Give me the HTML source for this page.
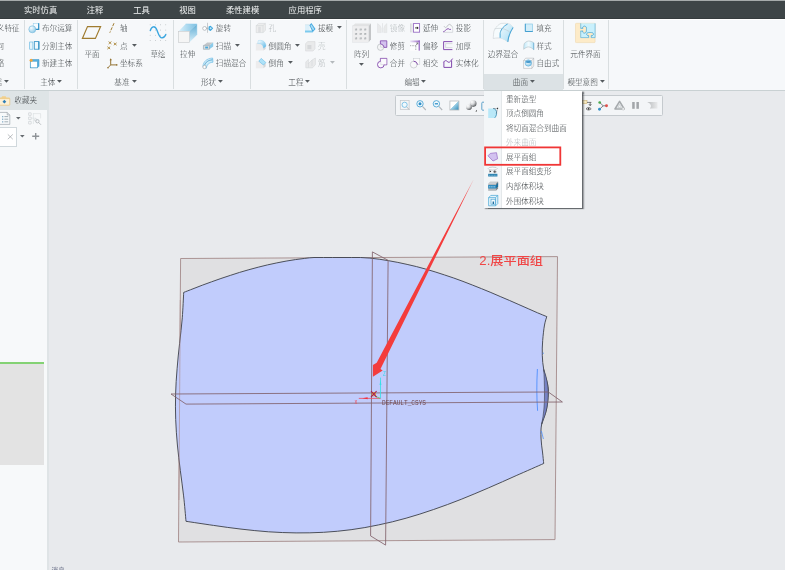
<!DOCTYPE html>
<html lang="zh-CN"><head><meta charset="utf-8"><title>Creo</title>
<style>
html,body{margin:0;padding:0}
body{width:785px;height:570px;overflow:hidden;position:relative;background:#e8eaed;font-family:"Liberation Sans","Noto Sans CJK SC",sans-serif;}
.t{position:absolute;white-space:nowrap;line-height:1;font-size:7.6px;color:#3a3f42;font-weight:300;}
.d{color:#b4b9bc}
.w{color:#f2f4f4;font-weight:400}
.a{position:absolute;overflow:visible}
#app{position:absolute;left:0;top:0;width:785px;height:570px;overflow:hidden;will-change:transform;}
</style></head><body><div id="app">
<div style="position:absolute;left:0px;top:0px;width:785px;height:18.6px;background:#3e4547;"></div>
<div style="position:absolute;left:0px;top:17.6px;width:785px;height:1px;background:#363c3e;"></div>
<div style="position:absolute;left:0px;top:0px;width:785px;height:1px;background:#a6abab;"></div>
<div style="position:absolute;left:0px;top:18.6px;width:785px;height:72px;background:#f6f8fa;"></div>
<div style="position:absolute;left:0px;top:18.6px;width:785px;height:1px;background:#ffffff;"></div>
<div style="position:absolute;left:0px;top:90px;width:785px;height:1.2px;background:#c9d1d3;"></div>
<div style="position:absolute;left:0px;top:91px;width:48.8px;height:479px;background:#dfe4e6;"></div>
<div style="position:absolute;left:0px;top:109.6px;width:47.2px;height:461px;background:#f7f9fa;"></div>
<div style="position:absolute;left:0px;top:91px;width:48.6px;height:18.6px;background:#dee4e6;"></div>
<div class="t w" style="left:24px;top:6.15px;font-size:8.3px;">实时仿真</div>
<div class="t w" style="left:86.8px;top:6.15px;font-size:8.3px;">注释</div>
<div class="t w" style="left:133.3px;top:6.15px;font-size:8.3px;">工具</div>
<div class="t w" style="left:179.3px;top:6.15px;font-size:8.3px;">视图</div>
<div class="t w" style="left:226px;top:6.15px;font-size:8.3px;">柔性建模</div>
<div class="t w" style="left:288.6px;top:6.15px;font-size:8.3px;">应用程序</div>
<div style="position:absolute;left:23.7px;top:20px;width:1px;height:69px;background:#d9dee0;"></div>
<div style="position:absolute;left:76.9px;top:20px;width:1px;height:69px;background:#d9dee0;"></div>
<div style="position:absolute;left:172.6px;top:20px;width:1px;height:69px;background:#d9dee0;"></div>
<div style="position:absolute;left:250.2px;top:20px;width:1px;height:69px;background:#d9dee0;"></div>
<div style="position:absolute;left:346.0px;top:20px;width:1px;height:69px;background:#d9dee0;"></div>
<div style="position:absolute;left:483.2px;top:20px;width:1px;height:69px;background:#d9dee0;"></div>
<div style="position:absolute;left:563.2px;top:20px;width:1px;height:69px;background:#d9dee0;"></div>
<div style="position:absolute;left:607.7px;top:20px;width:1px;height:69px;background:#d9dee0;"></div>
<div style="position:absolute;left:484.2px;top:74.2px;width:79px;height:16px;background:#dce2e5;"></div>
<div class="t " style="left:-3.2px;top:25.40px;">义特征</div>
<div class="t " style="left:-3.4px;top:43.10px;">何</div>
<div class="t " style="left:-3.4px;top:60.30px;">络</div>
<div class="t " style="left:-5.8px;top:78.90px;">据</div>
<svg class="a" style="left:4.25px;top:80.10px" width="4.9" height="2.8" viewBox="0 0 4.9 2.8"><path d="M0 0H4.9L2.45 2.8Z" fill="#565b5f"/></svg>
<div class="t " style="left:42px;top:25.40px;">布尔运算</div>
<div class="t " style="left:42px;top:43.10px;">分割主体</div>
<div class="t " style="left:42px;top:60.30px;">新建主体</div>
<div class="t " style="left:40.2px;top:78.90px;">主体</div>
<svg class="a" style="left:57.05px;top:80.10px" width="4.9" height="2.8" viewBox="0 0 4.9 2.8"><path d="M0 0H4.9L2.45 2.8Z" fill="#565b5f"/></svg>
<div class="t " style="left:42px;width:100px;text-align:center;top:51.40px;">平面</div>
<div class="t " style="left:120px;top:25.40px;">轴</div>
<div class="t " style="left:120px;top:43.10px;">点</div>
<svg class="a" style="left:131.85px;top:43.80px" width="4.9" height="2.8" viewBox="0 0 4.9 2.8"><path d="M0 0H4.9L2.45 2.8Z" fill="#565b5f"/></svg>
<div class="t " style="left:120px;top:60.30px;">坐标系</div>
<div class="t " style="left:108px;width:100px;text-align:center;top:51.40px;">草绘</div>
<div class="t " style="left:114.3px;top:78.90px;">基准</div>
<svg class="a" style="left:131.55px;top:80.10px" width="4.9" height="2.8" viewBox="0 0 4.9 2.8"><path d="M0 0H4.9L2.45 2.8Z" fill="#565b5f"/></svg>
<div class="t " style="left:137.7px;width:100px;text-align:center;top:51.40px;">拉伸</div>
<div class="t " style="left:215.8px;top:25.40px;">旋转</div>
<div class="t " style="left:215.8px;top:43.10px;">扫描</div>
<svg class="a" style="left:235.25px;top:43.80px" width="4.9" height="2.8" viewBox="0 0 4.9 2.8"><path d="M0 0H4.9L2.45 2.8Z" fill="#565b5f"/></svg>
<div class="t " style="left:215.8px;top:60.30px;">扫描混合</div>
<div class="t " style="left:201px;top:78.90px;">形状</div>
<svg class="a" style="left:218.05px;top:80.10px" width="4.9" height="2.8" viewBox="0 0 4.9 2.8"><path d="M0 0H4.9L2.45 2.8Z" fill="#565b5f"/></svg>
<div class="t d" style="left:268.6px;top:25.40px;">孔</div>
<div class="t " style="left:268.6px;top:43.10px;">倒圆角</div>
<svg class="a" style="left:295.45px;top:43.80px" width="4.9" height="2.8" viewBox="0 0 4.9 2.8"><path d="M0 0H4.9L2.45 2.8Z" fill="#565b5f"/></svg>
<div class="t " style="left:268.6px;top:60.30px;">倒角</div>
<svg class="a" style="left:287.75px;top:61.00px" width="4.9" height="2.8" viewBox="0 0 4.9 2.8"><path d="M0 0H4.9L2.45 2.8Z" fill="#565b5f"/></svg>
<div class="t " style="left:317.9px;top:25.40px;">拔模</div>
<svg class="a" style="left:337.45px;top:26.10px" width="4.9" height="2.8" viewBox="0 0 4.9 2.8"><path d="M0 0H4.9L2.45 2.8Z" fill="#565b5f"/></svg>
<div class="t d" style="left:317.9px;top:43.10px;">壳</div>
<div class="t d" style="left:317.9px;top:60.30px;">筋</div>
<svg class="a" style="left:329.85px;top:61.00px" width="4.9" height="2.8" viewBox="0 0 4.9 2.8"><path d="M0 0H4.9L2.45 2.8Z" fill="#b4b9bc"/></svg>
<div class="t " style="left:288.3px;top:78.90px;">工程</div>
<svg class="a" style="left:305.05px;top:80.10px" width="4.9" height="2.8" viewBox="0 0 4.9 2.8"><path d="M0 0H4.9L2.45 2.8Z" fill="#565b5f"/></svg>
<div class="t " style="left:311.6px;width:100px;text-align:center;top:51.40px;">阵列</div>
<svg class="a" style="left:358.95px;top:62.70px" width="4.9" height="2.8" viewBox="0 0 4.9 2.8"><path d="M0 0H4.9L2.45 2.8Z" fill="#565b5f"/></svg>
<div class="t d" style="left:389.8px;top:25.40px;">镜像</div>
<div class="t " style="left:389.8px;top:43.10px;">修剪</div>
<div class="t " style="left:389.8px;top:60.30px;">合并</div>
<div class="t " style="left:422.9px;top:25.40px;">延伸</div>
<div class="t " style="left:422.9px;top:43.10px;">偏移</div>
<div class="t " style="left:422.9px;top:60.30px;">相交</div>
<div class="t " style="left:455.8px;top:25.40px;">投影</div>
<div class="t " style="left:455.8px;top:43.10px;">加厚</div>
<div class="t " style="left:455.8px;top:60.30px;">实体化</div>
<div class="t " style="left:404.4px;top:78.90px;">编辑</div>
<svg class="a" style="left:421.35px;top:80.10px" width="4.9" height="2.8" viewBox="0 0 4.9 2.8"><path d="M0 0H4.9L2.45 2.8Z" fill="#565b5f"/></svg>
<div class="t " style="left:453px;width:100px;text-align:center;top:51.40px;">边界混合</div>
<div class="t " style="left:536.5px;top:25.40px;">填充</div>
<div class="t " style="left:536.5px;top:43.10px;">样式</div>
<div class="t " style="left:536.5px;top:60.30px;">自由式</div>
<div class="t " style="left:512.8px;top:78.90px;">曲面</div>
<svg class="a" style="left:529.85px;top:80.10px" width="4.9" height="2.8" viewBox="0 0 4.9 2.8"><path d="M0 0H4.9L2.45 2.8Z" fill="#565b5f"/></svg>
<div class="t " style="left:535.5px;width:100px;text-align:center;top:51.40px;">元件界面</div>
<div class="t " style="left:567.4px;top:78.90px;">模型意图</div>
<svg class="a" style="left:600.05px;top:80.10px" width="4.9" height="2.8" viewBox="0 0 4.9 2.8"><path d="M0 0H4.9L2.45 2.8Z" fill="#565b5f"/></svg>
<div class="t " style="left:14.3px;top:96.60px;">收藏夹</div>
<div style="position:absolute;left:-1px;top:127.4px;width:15.7px;height:17.2px;background:#fff;border:0.9px solid #d0d8dc;"></div>
<svg class="a" style="left:15.80px;top:117.25px" width="4.6" height="2.5" viewBox="0 0 4.6 2.5"><path d="M0 0H4.6L2.3 2.5Z" fill="#666b6f"/></svg>
<svg class="a" style="left:20.20px;top:135.25px" width="4.6" height="2.5" viewBox="0 0 4.6 2.5"><path d="M0 0H4.6L2.3 2.5Z" fill="#666b6f"/></svg>
<div style="position:absolute;left:0px;top:362.2px;width:43.7px;height:1.8px;background:#84d274;"></div>
<div style="position:absolute;left:0px;top:364px;width:43.7px;height:100.8px;background:#e3e3e3;"></div>
<div class="t " style="left:51.6px;top:568.10px;font-size:6.6px;color:#8a8fa2;font-weight:700;">消息</div>
<div style="position:absolute;left:394.9px;top:95.2px;width:266.6px;height:19.0px;background:#f3f5f7;border:0.9px solid #c5cace;border-radius:1.5px;"></div>
<svg class="a" style="left:0;top:0" width="785" height="570" viewBox="0 0 785 570"><path d="M180.6 258.5L557.5 256.6L555 539.6L178.5 542Z" fill="#e0e0e2" stroke="#a48a8a" stroke-width="0.9"/><path d="M183.7 292.4C185.3 291.8 189.9 290.0 193.0 288.8C196.1 287.6 199.2 286.4 202.3 285.2C205.4 284.1 208.5 282.9 211.6 281.8C214.7 280.7 217.8 279.6 220.9 278.5C224.0 277.4 227.1 276.4 230.3 275.4C233.4 274.4 236.5 273.4 239.6 272.4C242.7 271.5 245.8 270.6 248.9 269.7C252.0 268.8 255.1 268.0 258.2 267.2C261.3 266.4 264.4 265.6 267.5 264.9C270.6 264.2 273.7 263.5 276.8 262.9C279.9 262.2 283.0 261.7 286.1 261.1C289.2 260.6 292.3 260.1 295.4 259.6C298.5 259.2 301.6 258.7 304.7 258.4C307.8 258.0 310.9 257.6 314.0 257.5C317.1 257.4 320.3 257.5 323.4 257.5C326.5 257.5 329.6 257.5 332.7 257.5C335.8 257.5 338.9 257.5 342.0 257.5C345.1 257.5 348.2 257.5 351.3 257.5C354.4 257.5 357.5 257.4 360.6 257.5C363.7 257.6 366.8 257.8 369.9 258.1C373.0 258.4 376.1 258.8 379.2 259.2C382.3 259.7 385.4 260.1 388.5 260.7C391.6 261.2 394.7 261.8 397.8 262.4C400.9 263.0 404.0 263.7 407.1 264.4C410.2 265.1 413.4 265.8 416.5 266.6C419.6 267.4 422.7 268.3 425.8 269.1C428.9 270.0 432.0 270.9 435.1 271.9C438.2 272.8 441.3 273.8 444.4 274.9C447.5 275.9 450.6 276.9 453.7 278.0C456.8 279.1 459.9 280.3 463.0 281.4C466.1 282.6 469.2 283.8 472.3 285.0C475.4 286.2 478.5 287.4 481.6 288.7C484.7 289.9 487.8 291.2 490.9 292.5C494.0 293.8 497.1 295.1 500.2 296.5C503.4 297.8 506.5 299.1 509.6 300.5C512.7 301.8 515.8 303.2 518.9 304.6C522.0 305.9 525.1 307.3 528.2 308.7C531.3 310.1 534.4 311.5 537.5 312.8C540.6 314.1 545.2 316.0 546.8 316.6C546.4 318.0 545.2 321.1 544.5 325.0C543.8 328.9 543.1 335.2 542.7 340.3C542.3 345.4 542.1 350.8 542.3 355.6C542.5 360.4 542.8 364.6 543.7 369.3C544.6 374.0 546.8 379.9 547.6 384.0C548.4 388.1 548.5 389.7 548.3 394.0C548.1 398.3 547.5 404.9 546.4 410.0C545.3 415.1 542.5 419.8 541.6 424.5C540.7 429.2 540.9 433.4 541.0 438.0C541.1 442.6 542.0 447.8 542.5 452.0C543.0 456.2 543.5 461.6 543.7 463.5C539.1 465.5 525.4 471.6 516.2 475.6C507.0 479.7 497.8 483.9 488.7 487.8C479.5 491.7 470.3 495.7 461.2 499.3C452.0 502.9 442.8 506.4 433.6 509.5C424.5 512.7 415.3 515.6 406.1 518.2C397.0 520.8 387.8 523.0 378.6 524.9C369.4 526.9 360.3 528.4 351.1 529.7C341.9 530.9 332.7 531.8 323.6 532.3C314.4 532.8 305.2 533.0 296.1 532.9C286.9 532.8 277.7 532.4 268.5 531.8C259.4 531.1 250.2 530.2 241.0 529.1C231.9 528.1 222.7 526.7 213.5 525.4C204.3 524.1 190.6 522.0 186.0 521.3C185.6 517.1 184.6 504.3 183.6 495.9C182.7 487.4 181.3 478.9 180.3 470.4C179.3 462.0 178.2 453.5 177.4 445.0C176.6 436.5 176.0 428.0 175.7 419.6C175.4 411.1 175.4 402.6 175.6 394.1C175.8 385.7 176.4 377.2 177.1 368.7C177.7 360.2 178.7 351.7 179.6 343.3C180.5 334.8 181.6 326.3 182.3 317.8C182.9 309.4 183.5 296.6 183.7 292.4Z" fill="#c1ccfc" stroke="#3c4048" stroke-width="0.9" stroke-linejoin="round"/><path d="M543.7 369.3C547 378 548.6 388 548.2 396C547.8 408 545 416 541.6 424.5C543.8 414 544.6 404 544.5 394C544.4 384 544.2 376 543.7 369.3Z" fill="#7682c4" stroke="#3c4048" stroke-width="0.6"/><path d="M537.4 369C536.6 384 536.6 398 537.6 410.8" fill="none" stroke="#3f86ff" stroke-width="0.8"/><path d="M541.4 431L543.4 439M542.6 353.2H544" fill="none" stroke="#3f86ff" stroke-width="0.7"/><path d="M180.3 300L178.9 500" stroke="#a98686" stroke-width="0.8" opacity="0.75"/><path d="M372.4 251.9L370.6 535.9L385.6 545.1L388.1 260.3Z" fill="none" stroke="#82626c" stroke-width="0.85"/><path d="M171 394L548.3 392L562.4 402L186 404.1Z" fill="none" stroke="#82626c" stroke-width="0.85"/><path d="M380.5 398.4V377.6" stroke="#35e0e6" stroke-width="0.8"/><path d="M380.5 380L379.6 385H381.4Z" fill="#35e0e6"/><path d="M380.5 398.4H358.8" stroke="#f04a5a" stroke-width="0.8"/><path d="M362.4 398.2L367.6 397.2V399.2Z" fill="#f0303c"/><path d="M375.2 396.2L380.2 398.4" stroke="#4cc84c" stroke-width="0.7"/><circle cx="373.8" cy="394.2" r="1.7" fill="none" stroke="#e8a020" stroke-width="1"/><path d="M371 391L376.6 397.2M376.6 391L371 397.2" stroke="#a81c50" stroke-width="1.1"/><text x="382.9" y="376.4" font-family="Liberation Mono, monospace" font-size="6.4" fill="#35d8e6" textLength="2.8" lengthAdjust="spacingAndGlyphs">Z</text><text x="354.4" y="403.8" font-family="Liberation Mono, monospace" font-size="4.6" fill="#f0404c">X</text><text x="382" y="404.9" font-family="Liberation Mono, monospace" font-size="7" fill="#70484e" textLength="44" lengthAdjust="spacingAndGlyphs">DEFAULT_CSYS</text><path d="M473.7 179.3L380.5 368.9L382.7 370.4L372.9 376.8L372.9 365L376.7 362.7Z" fill="#f43c3c"/><text transform="translate(479.3,265.2) scale(1,0.9)" font-family="Liberation Sans, Noto Sans CJK SC, sans-serif" font-size="13.2" font-weight="500" fill="#f04646">2.展平面组</text></svg>
<svg class="a" style="left:0;top:0" width="785" height="570" viewBox="0 0 785 570"><defs><linearGradient id="tg1" x1="0" y1="0" x2="1" y2="1"><stop offset="0.5" stop-color="#ffffff"/><stop offset="0.5" stop-color="#9fd0e6"/><stop offset="1" stop-color="#2a88b8"/></linearGradient>
<linearGradient id="tg2" x1="0" y1="0" x2="1" y2="0"><stop offset="0" stop-color="#b9bcbe"/><stop offset="1" stop-color="#e9eaeb"/></linearGradient>
<linearGradient id="tg3" x1="0" y1="1" x2="1" y2="0"><stop offset="0" stop-color="#e4e5e6"/><stop offset="0.6" stop-color="#8c9093"/><stop offset="1" stop-color="#3c3f42"/></linearGradient>
<radialGradient id="tg4" cx="0.3" cy="0.25" r="0.85"><stop offset="0" stop-color="#ffffff"/><stop offset="0.45" stop-color="#d4d6d8"/><stop offset="1" stop-color="#4a4d50"/></radialGradient></defs><rect x="400.3" y="100.6" width="8.8" height="8.8" fill="#f4f5f6" stroke="#c2c6c9" stroke-width="0.7"/><circle cx="404.6" cy="104.8" r="2.6" fill="#f0f9fd" stroke="#58b0e0" stroke-width="0.7"/><path d="M406.6 106.8L409.4 109.8" stroke="#b4b9bd" stroke-width="1"/><circle cx="420" cy="103.8" r="3.2" fill="#f2f9fd" stroke="#3c9dd0" stroke-width="0.8"/><circle cx="420" cy="103.8" r="1.5" fill="#2f8fc8"/><path d="M422.4 106.4L425.8 110" stroke="#b2b7bb" stroke-width="1.1"/><circle cx="436.4" cy="103.8" r="3.2" fill="#f2f9fd" stroke="#3c9dd0" stroke-width="0.8"/><path d="M434.8 103.8H438" stroke="#2f8fc8" stroke-width="1.3"/><path d="M438.8 106.4L442.2 110" stroke="#b2b7bb" stroke-width="1.1"/><rect x="449.9" y="101" width="9" height="9" fill="url(#tg1)" stroke="#b7bbbe" stroke-width="0.8"/><circle cx="473.2" cy="103.6" r="3.3" fill="url(#tg4)"/><circle cx="469" cy="107.2" r="2.8" fill="url(#tg4)"/><path d="M475.4 111.4L476.9 111.4V109.8Z" fill="#333"/><path d="M484.4 102.2H482.6C482 102.2 481.8 102.6 481.8 103.2V109.2C481.8 109.8 482 110.2 482.6 110.2H484.4" fill="none" stroke="#3c8fc0" stroke-width="0.8"/><rect x="582.4" y="100.5" width="4.6" height="3.2" fill="#f9ebc0" stroke="#c4a868" stroke-width="0.5"/><path d="M587 102.4H591.4M590.2 102.4V105.4M588.8 104L590.2 105.8L591.4 104" fill="none" stroke="#333" stroke-width="0.6"/><path d="M586 108.8C587.4 107 589.8 107 591.2 108.8C589.8 110.4 587.4 110.4 586 108.8Z" fill="#fff" stroke="#333" stroke-width="0.6"/><circle cx="588.6" cy="108.8" r="0.9" fill="#333"/><path d="M599.8 102.6L603.2 105.8L599.6 109.2M603.2 105.8H606.4" fill="none" stroke="#4a4f53" stroke-width="0.7"/><circle cx="599.7" cy="102.5" r="1.35" fill="#49a84c"/><circle cx="606.5" cy="105.8" r="1.45" fill="#e0504a"/><circle cx="599.5" cy="109.2" r="1.45" fill="#3591c8"/><path d="M619.6 101.4L624.2 109H615Z" fill="none" stroke="#a6aaad" stroke-width="1.6" stroke-linejoin="round"/><path d="M619.6 104.4L621.4 107.6H617.8Z" fill="none" stroke="#b9bdc0" stroke-width="0.6"/><circle cx="623.2" cy="108.9" r="1.2" fill="#f5f6f7" stroke="#b0b4b7" stroke-width="0.5"/><rect x="632.2" y="102" width="2.5" height="6.8" fill="#a2a6a9"/><rect x="636.4" y="102" width="2.5" height="6.8" fill="#a2a6a9"/><path d="M647.2 102H657.5V108.5H649.8C651.8 106.8 651.6 104 647.2 102Z" fill="url(#tg2)"/></svg>
<svg class="a" style="left:0;top:0" width="785" height="570" viewBox="0 0 785 570"><path d="M-1 97.4H1.4L2.2 96.2H5.6L6.4 97.4H9.2C9.6 97.4 9.8 97.6 9.8 98V104.6C9.8 105 9.6 105.2 9.2 105.2H-1Z" fill="#f3d08c"/><path d="M-1 98.6H9.8V104.6C9.8 105 9.6 105.2 9.2 105.2H-1Z" fill="#fdf0d4" stroke="#e2b866" stroke-width="0.5"/><path d="M4.4 99.8L6.3 101.7L4.4 103.6L2.5 101.7Z" fill="#2f7fb8"/><path d="M-1 112.4H7.2L9.8 115V124.4H-1Z" fill="#f8fafb" stroke="#8e979d" stroke-width="0.6"/><path d="M7.2 112.4V115H9.8" fill="#dfe4e7" stroke="#8e979d" stroke-width="0.5"/><rect x="2" y="116.0" width="1.3" height="1.3" fill="#8ab0c8"/><path d="M4.4 116.6H8.2" stroke="#7f8f9a" stroke-width="0.7"/><rect x="2" y="118.60000000000001" width="1.3" height="1.3" fill="#8ab0c8"/><path d="M4.4 119.2H8.2" stroke="#7f8f9a" stroke-width="0.7"/><rect x="2" y="121.2" width="1.3" height="1.3" fill="#8ab0c8"/><path d="M4.4 121.8H8.2" stroke="#7f8f9a" stroke-width="0.7"/><rect x="28.6" y="112.8" width="2.6" height="2.6" rx="0.2" fill="none" stroke="#c3c8cc" stroke-width="0.55"/><rect x="28.6" y="117.0" width="2.6" height="2.6" rx="0.2" fill="none" stroke="#c3c8cc" stroke-width="0.55"/><rect x="28.6" y="121.39999999999999" width="2.6" height="2.6" rx="0.2" fill="none" stroke="#c3c8cc" stroke-width="0.55"/><path d="M33.4 113V124M33.4 113.6H40.6V118.4M31.4 118.2H36" fill="none" stroke="#d3d8db" stroke-width="0.5"/><circle cx="37.4" cy="121.2" r="1.7" fill="none" stroke="#a9afb3" stroke-width="0.7"/><circle cx="35.8" cy="120" r="1.3" fill="none" stroke="#c4c9cd" stroke-width="0.5"/><path d="M38.6 122.4L41 124.8" stroke="#a9afb3" stroke-width="0.8"/><path d="M7.8 134.4L12.8 139.2M12.8 134.4L7.8 139.2" stroke="#8f9498" stroke-width="0.6"/><path d="M32.2 136.3H39.2M35.7 133V139.6" stroke="#8e9397" stroke-width="1.4"/></svg>
<svg class="a" style="left:0;top:0" width="785" height="570" viewBox="0 0 785 570"><defs>
<radialGradient id="gs" cx="0.35" cy="0.3" r="0.8"><stop offset="0" stop-color="#f8fcfe"/><stop offset="1" stop-color="#86c6e6"/></radialGradient>
<linearGradient id="gt" x1="0" y1="0" x2="1" y2="0"><stop offset="0" stop-color="#d8f0fb"/><stop offset="1" stop-color="#7cc0e2"/></linearGradient>
<linearGradient id="gr" x1="0" y1="0" x2="0" y2="1"><stop offset="0" stop-color="#5fabd2"/><stop offset="1" stop-color="#d8f0fb"/></linearGradient>
<linearGradient id="gb" x1="0" y1="0" x2="1" y2="1"><stop offset="0" stop-color="#f2fafe"/><stop offset="1" stop-color="#a6dcf3"/></linearGradient>
<linearGradient id="gg" x1="0" y1="0" x2="1" y2="0"><stop offset="0" stop-color="#d6d8da"/><stop offset="1" stop-color="#f2f3f4"/></linearGradient>
<linearGradient id="gp" x1="0" y1="0" x2="1" y2="0"><stop offset="0" stop-color="#efe8fa"/><stop offset="1" stop-color="#9a68c4"/></linearGradient>
<linearGradient id="gf" x1="0" y1="0" x2="1" y2="1"><stop offset="0.1" stop-color="#f4fbfe"/><stop offset="1" stop-color="#54b4e6"/></linearGradient>
<linearGradient id="gy" x1="0" y1="0" x2="1" y2="0"><stop offset="0" stop-color="#bfe8f9"/><stop offset="0.5" stop-color="#f2fbfe"/><stop offset="1" stop-color="#b4e3f7"/></linearGradient>
</defs><rect x="33.2" y="23.4" width="5.6" height="5.8" fill="#f6fbfe" stroke="#8fcdea" stroke-width="0.5"/><path d="M38.7 23.2V29.3H34" fill="none" stroke="#2f8fc4" stroke-width="1.2"/><circle cx="32.3" cy="29.3" r="3.5" fill="url(#gs)" stroke="#74b9dc" stroke-width="0.6"/><rect x="29.7" y="42" width="3.2" height="7.2" fill="#e6f4fb" stroke="#5bb4e2" stroke-width="0.6"/><rect x="34.3" y="41.6" width="4.5" height="7.6" fill="#eef8fd" stroke="#2f8fc4" stroke-width="0.8"/><path d="M38.9 41.4V49.4" stroke="#2f8fc4" stroke-width="1.1"/><path d="M30.4 61.2L32 59.6H39V66.2L37.4 67.8H30.4Z" fill="#5bb4e2" stroke="#2f8fc4" stroke-width="0.5"/><rect x="30.4" y="61.2" width="7" height="6.6" fill="#ffffff" stroke="#2f8fc4" stroke-width="0.5"/><circle cx="31.1" cy="60.3" r="1.5" fill="#f5a73c"/><path d="M87.5 26.6H100.6L95.4 38.4H82.4Z" fill="none" stroke="#a07c30" stroke-width="1.15"/><path d="M114 23.2L109.8 32.7" stroke="#a07c30" stroke-width="1" stroke-dasharray="3.2 1.3"/><path d="M108.6 41.599999999999994L111.4 44.0M108.6 44.0L111.4 41.599999999999994" stroke="#a98638" stroke-width="0.9"/><path d="M113.8 42.8L116.60000000000001 45.2M113.8 45.2L116.60000000000001 42.8" stroke="#a98638" stroke-width="0.9"/><path d="M107.39999999999999 46.699999999999996L110.2 49.1M107.39999999999999 49.1L110.2 46.699999999999996" stroke="#a98638" stroke-width="0.9"/><path d="M110.7 59.6V64.9H116.4M110.7 64.9L108.2 67.5" fill="none" stroke="#8e6c28" stroke-width="0.95"/><path d="M110.7 58.2L109.6 60.2H111.8Z" fill="#8e6c28"/><rect x="116" y="64.2" width="1.4" height="1.4" fill="#8e6c28"/><circle cx="108" cy="67.7" r="0.8" fill="#8e6c28"/><rect x="149.79999999999998" y="24.400000000000002" width="0.8" height="0.8" fill="#b4b9bd"/><rect x="149.79999999999998" y="29.700000000000003" width="0.8" height="0.8" fill="#b4b9bd"/><rect x="149.79999999999998" y="34.9" width="0.8" height="0.8" fill="#b4b9bd"/><rect x="149.79999999999998" y="40.2" width="0.8" height="0.8" fill="#b4b9bd"/><rect x="155.0" y="24.400000000000002" width="0.8" height="0.8" fill="#b4b9bd"/><rect x="155.0" y="29.700000000000003" width="0.8" height="0.8" fill="#b4b9bd"/><rect x="155.0" y="34.9" width="0.8" height="0.8" fill="#b4b9bd"/><rect x="155.0" y="40.2" width="0.8" height="0.8" fill="#b4b9bd"/><rect x="160.2" y="24.400000000000002" width="0.8" height="0.8" fill="#b4b9bd"/><rect x="160.2" y="29.700000000000003" width="0.8" height="0.8" fill="#b4b9bd"/><rect x="160.2" y="34.9" width="0.8" height="0.8" fill="#b4b9bd"/><rect x="160.2" y="40.2" width="0.8" height="0.8" fill="#b4b9bd"/><rect x="165.29999999999998" y="24.400000000000002" width="0.8" height="0.8" fill="#b4b9bd"/><rect x="165.29999999999998" y="29.700000000000003" width="0.8" height="0.8" fill="#b4b9bd"/><rect x="165.29999999999998" y="34.9" width="0.8" height="0.8" fill="#b4b9bd"/><rect x="165.29999999999998" y="40.2" width="0.8" height="0.8" fill="#b4b9bd"/><path d="M150.3 30.6C151.5 25.8 155.2 25.4 157 30.2C158.6 34.6 159.6 38.2 162 37.9C164 37.6 165.2 36 165.8 34.4" fill="none" stroke="#3aa6e0" stroke-width="1.35" stroke-linecap="round"/><path d="M178.6 31.3L185.7 23.9H196.9L189.3 31.3Z" fill="url(#gt)"/><path d="M189.3 31.3L196.9 23.9V35L189.3 42.5Z" fill="url(#gr)"/><path d="M185.7 23.9H196.9V35" fill="none" stroke="#8ccbe8" stroke-width="0.4"/><rect x="178.6" y="31.3" width="10.7" height="11.2" fill="#f5f5f5" stroke="#c6c9cb" stroke-width="0.6"/><path d="M207.5 22.8V32.8" stroke="#a8adb0" stroke-width="0.6"/><circle cx="204.6" cy="28.4" r="1.9" fill="#fff" stroke="#9aa0a4" stroke-width="0.6"/><path d="M206 28.3H208.6" stroke="#9aa0a4" stroke-width="0.6"/><path d="M208.6 26.6L210.6 25.7L213.2 28.2L210.6 30.9L208.6 30Z" fill="#38a4dc"/><circle cx="210.6" cy="28.3" r="1" fill="#c6e8f8"/><path d="M203.4 45.4L207.2 42.4H213.2L209.4 45.4Z" fill="#c3c7ca"/><path d="M203.4 45.4H209.4L213.2 42.6V46.4L209.4 49.3H203.4Z" fill="#8acbea"/><path d="M203.4 45.4H209.4V49.3H203.4Z" fill="#d9dcde" stroke="#9aa1a6" stroke-width="0.5"/><path d="M205.2 46.6H208V48.4H205.2Z" fill="#4aa9da"/><path d="M202.9 66.4C203.4 61.6 206.4 58.6 212.6 58L213 62.2C209 62.6 207.2 64.2 206.2 68.2Z" fill="url(#gb)" stroke="#5bb4e2" stroke-width="0.6"/><path d="M204.6 65.2C205.6 62 207.8 60.4 212.4 59.8" fill="none" stroke="#2f8fc4" stroke-width="0.7"/><circle cx="204.5" cy="67" r="1.7" fill="#fff" stroke="#8e959a" stroke-width="0.55"/><path d="M256.2 25.6L258.6 23.4H265.4V30.4L263 32.6H256.2Z" fill="#eceded" stroke="#cfd2d4" stroke-width="0.5"/><path d="M256.2 25.6H263V32.6M263 25.6L265.4 23.4" fill="none" stroke="#cfd2d4" stroke-width="0.5"/><rect x="258.2" y="26.8" width="2.6" height="5.8" fill="#dcdee0"/><path d="M255.8 43H263.4V50.5H255.8Z" fill="#ececed"/><path d="M263.4 44.5L265.6 46.4V49L263.4 50.5Z" fill="#d4d6d8"/><path d="M258.4 40.5C261 40 263.4 40.6 264.6 42.2C265.6 43.4 266 44.8 266 46.2L263.4 48.2C263.2 46.4 262.8 45.2 261.8 44.4C260.8 43.6 259.4 43.4 257.6 43.6Z" fill="url(#gf)" stroke="#7cc8ee" stroke-width="0.35"/><path d="M255.8 61H263.4V68.3H255.8Z" fill="#ececed"/><path d="M263.4 64.6L265.6 62.8V66.6L263.4 68.3Z" fill="#d4d6d8"/><path d="M261.2 58.4L265.9 62.5L263.4 65L258.8 61.2Z" fill="#aee2f8" stroke="#58b4e2" stroke-width="0.5"/><path d="M305 24.7H309.6V30.8H305Z" fill="#dcf0fa"/><path d="M305 24.7H309.6" stroke="#c4d8e2" stroke-width="0.4"/><path d="M305 30.6H312.4L312.8 32.4H305Z" fill="#7ccaee"/><path d="M311.4 23L315.5 29.1L312.7 32.3L309.4 25.3Z" fill="#44a8e0"/><path d="M311.4 24.6L314.3 29.1L313.1 30.5L310.4 25.7Z" fill="#a8dcf4"/><path d="M305.6 43.8L307.6 41.6H315V48.8L313 51H305.6Z" fill="#e9eaeb" stroke="#d0d3d5" stroke-width="0.5"/><rect x="307.4" y="45" width="4" height="4.2" fill="#d6d8da"/><path d="M305.8 62L308.4 59.4V63.6L312 60L315.4 58V64.6L312.6 67.8H305.8Z" fill="#e9eaeb" stroke="#cfd2d4" stroke-width="0.5"/><path d="M308.4 63.6V67.6M312 60V66" stroke="#cfd2d4" stroke-width="0.5" fill="none"/><path d="M352.5 25.9L355.2 23.5H371L368.6 25.9Z" fill="#e2e3e4"/><path d="M368.6 25.9L371 23.5V39.3L368.6 42.2Z" fill="#c3c5c7"/><rect x="352.5" y="25.9" width="16.1" height="16.3" fill="#eeeeef" stroke="#dadcde" stroke-width="0.4"/><rect x="354.95" y="28.650000000000002" width="2.1" height="1.9" fill="#bec1c3"/><path d="M355.8 28.650000000000002H357.05V30.0Z" fill="#a9adb0"/><rect x="354.95" y="33.05" width="2.1" height="1.9" fill="#bec1c3"/><path d="M355.8 33.05H357.05V34.4Z" fill="#a9adb0"/><rect x="354.95" y="37.55" width="2.1" height="1.9" fill="#bec1c3"/><path d="M355.8 37.55H357.05V38.9Z" fill="#a9adb0"/><rect x="359.55" y="28.650000000000002" width="2.1" height="1.9" fill="#bec1c3"/><path d="M360.40000000000003 28.650000000000002H361.65000000000003V30.0Z" fill="#a9adb0"/><rect x="359.55" y="33.05" width="2.1" height="1.9" fill="#bec1c3"/><path d="M360.40000000000003 33.05H361.65000000000003V34.4Z" fill="#a9adb0"/><rect x="359.55" y="37.55" width="2.1" height="1.9" fill="#bec1c3"/><path d="M360.40000000000003 37.55H361.65000000000003V38.9Z" fill="#a9adb0"/><rect x="364.05" y="28.650000000000002" width="2.1" height="1.9" fill="#bec1c3"/><path d="M364.90000000000003 28.650000000000002H366.15000000000003V30.0Z" fill="#a9adb0"/><rect x="364.05" y="33.05" width="2.1" height="1.9" fill="#bec1c3"/><path d="M364.90000000000003 33.05H366.15000000000003V34.4Z" fill="#a9adb0"/><rect x="364.05" y="37.55" width="2.1" height="1.9" fill="#bec1c3"/><path d="M364.90000000000003 37.55H366.15000000000003V38.9Z" fill="#a9adb0"/><path d="M377.5 23.6C379.6 24.8 380.8 26.4 381.2 28.2V32.6H377.5Z" fill="#e9eaeb" stroke="#d9dbdd" stroke-width="0.4"/><path d="M386.8 23.6C385.2 24.8 384.2 26.4 383.8 28.2V32.6H386.8Z" fill="#e9eaeb" stroke="#d9dbdd" stroke-width="0.4"/><path d="M382.5 23.2V32.6" stroke="#d4d6d8" stroke-width="0.5"/><circle cx="380.6" cy="47.2" r="3.2" fill="#f4f5f6" stroke="#adb2b5" stroke-width="0.6"/><path d="M380.6 44.6V47.2H383.4" fill="none" stroke="#c0c4c7" stroke-width="0.5"/><path d="M380.4 40.8H386.8V47.4H383.9C383.8 45.4 382.6 44.2 380.4 44Z" fill="#d3c2ee" stroke="#8248ad" stroke-width="0.8"/><path d="M380.4 58.4H386.8V64.8H380.4Z" fill="#fbfafd" stroke="#8248ad" stroke-width="0.9"/><circle cx="380.8" cy="64.6" r="3.3" fill="#fbfafd" stroke="#8248ad" stroke-width="0.9"/><path d="M380.85 58.85H386.35V64.35H380.85Z" fill="#fbfafd"/><path d="M380.8 61.6V64.6H383.8" fill="none" stroke="#c8cbce" stroke-width="0.5"/><rect x="410" y="23.4" width="3.2" height="9" fill="url(#gg)"/><rect x="413.4" y="23.6" width="6.2" height="8.6" fill="#fff" stroke="#9468c2" stroke-width="0.85"/><path d="M415 27.9H417.4" stroke="#222" stroke-width="0.8"/><path d="M416.9 26.5L418.7 27.9L416.9 29.3Z" fill="#222"/><rect x="410" y="42.2" width="8.8" height="8.4" fill="#fdfdfe"/><rect x="410" y="40.5" width="9.9" height="1.8" fill="url(#gp)"/><rect x="418.6" y="40.5" width="1.3" height="10.1" fill="#9a6cc6"/><path d="M410.2 45.7H415.6M415.8 46V50.6" fill="none" stroke="#555a5e" stroke-width="0.6" stroke-dasharray="0.8 0.8"/><path d="M415.8 45.5L417.7 42.9M416.4 42.9H417.8V44.4" fill="none" stroke="#444" stroke-width="0.55"/><rect x="413.7" y="58.3" width="6.1" height="6.3" fill="#fbfbfc" stroke="#c4c8cb" stroke-width="0.5"/><circle cx="413.7" cy="64.6" r="3.4" fill="#f8f9fa" stroke="#b0b4b8" stroke-width="0.55"/><path d="M413.7 61.3C415.9 61.4 417.2 62.6 417.3 64.6" fill="none" stroke="#8248ad" stroke-width="1"/><path d="M444 26.2C445.4 28.4 446.4 27.6 447.4 26C448.4 24.2 450 23.8 450.8 25C451.6 26.2 452 26.8 452.7 27" fill="none" stroke="#9fa4a8" stroke-width="0.6"/><path d="M443.2 31.8C445 31.6 446 29 448 28.7C449.4 28.6 449.4 30.4 450.9 29.2" fill="none" stroke="#8248ad" stroke-width="0.95"/><path d="M443.2 32.4H452.7V27" fill="none" stroke="#c4c6cc" stroke-width="0.55"/><path d="M452.4 41.6H443.6V49.6H452.4" fill="none" stroke="#8248ad" stroke-width="0.95"/><path d="M452.4 43.6H445.6V47.6H452.4" fill="none" stroke="#c3c7ca" stroke-width="0.6"/><path d="M443.6 62.2C444.6 60.4 446.2 60.2 447.2 61.4C448.2 62.6 449.6 62.6 450.6 61.2L452.6 58.6M443.9 61.8V67.4H451.6V60.6" fill="none" stroke="#8248ad" stroke-width="1"/><path d="M493.2 38.5C493.4 35.6 493.6 33.4 493.9 31.4C494.6 29.2 495.6 27.6 496.7 26.8C498 25.2 499.4 24 501.2 23.4C503.6 23.2 506.2 23.2 508.5 23.6C510.4 24.4 512 25.8 513.1 27.5C510.4 31.4 508.4 36.4 507.8 41.9C505.8 40.2 503.4 38.8 500.8 38.2C498.4 37.8 495.8 37.9 493.2 38.5Z" fill="#f6fbfd" stroke="#c2c8cc" stroke-width="0.5"/><path d="M507.6 24.1C505.2 25.2 503.4 26.8 502.1 28.7C500.8 30.6 500.2 32.2 500.1 33.7C500 35 500 36.4 500.1 37.9C503 38.6 505.6 40 507.8 41.9C508.4 36.4 510.4 31.4 513.1 27.5C512 25.8 510.4 24.4 508.5 23.8Z" fill="url(#gb)"/><path d="M494.8 28.9C497.6 28.2 500.4 28.1 503 28.7C505.6 29.4 508 30.6 509.9 32.3" fill="none" stroke="#b9c0c4" stroke-width="0.5"/><path d="M507.6 24.1C505.2 25.2 503.4 26.8 502.1 28.7C500.8 30.6 500.2 32.2 500.1 33.7C500 35 500 36.4 500.1 37.8" fill="none" stroke="#4aa6d6" stroke-width="1"/><path d="M513.1 27.5C510.4 31.4 508.4 36.4 507.8 41.9" fill="none" stroke="#4aa6d6" stroke-width="1.1"/><rect x="525.3" y="24" width="7.3" height="7.5" fill="#d2edf9" stroke="#8ccbe8" stroke-width="0.7"/><path d="M525.3 23.8V31.5H532.8" fill="none" stroke="#3a98cc" stroke-width="0.9"/><path d="M523.7 49.3C523.7 47.4 523.8 45.4 524.1 43.7C525.4 42.2 527 41.2 528.7 41C530.6 41 532.4 41.8 533.7 42.8V49.8C532.2 48.2 530.6 47.1 528.7 46.9C526.8 46.9 525.2 47.9 523.7 49.3Z" fill="url(#gy)" stroke="#a9b2b7" stroke-width="0.5"/><path d="M533.7 42.8V49.8" stroke="#5ab0de" stroke-width="0.7"/><path d="M523.6 60.6L525.6 58.2H533.7V66L531.9 68.4H523.6Z" fill="#f9fafb" stroke="#9ea4a8" stroke-width="0.45"/><path d="M523.6 60.6H531.9V68.4M531.9 60.6L533.7 58.2" fill="none" stroke="#9ea4a8" stroke-width="0.45"/><circle cx="528.3" cy="63" r="3.2" fill="url(#gs)" stroke="#4aa4d6" stroke-width="0.5"/><path d="M525.4 62.2C526.4 60 530.2 60 531.2 62.2C530 63.2 526.6 63.2 525.4 62.2Z" fill="#2f8cc6" opacity="0.85"/><rect x="575.5" y="23.3" width="19.6" height="19.3" rx="0.7" fill="#fdebc8" stroke="#ecd3a4" stroke-width="0.5"/><path d="M580.7 23.3H595.1V37.6H580.7Z" fill="#c9f0fc"/><path d="M580.7 23.3V28.4H583C582.4 27.4 583 26.2 584.6 26.2C586.4 26.2 586.6 28.2 586.4 29.6C586.4 31.2 586.2 33 584.6 33C583 33 582.4 31.8 583 30.9H580.7V37.6H588.7V35.4C587.2 35.6 586.6 34.9 586.7 34.1C586.8 33 588.2 32.5 590.1 32.5C592 32.5 593.4 33 593.5 34.1C593.6 34.9 592.8 35.6 591.2 35.4V37.6H595.1V23.3" fill="none" stroke="#48a8d8" stroke-width="0.6"/><path d="M580.7 28.4H583C582.4 27.4 583 26.2 584.6 26.2C586.4 26.2 586.6 28.2 586.4 29.6C586.4 31.2 586.2 33 584.6 33C583 33 582.4 31.8 583 30.9H580.7Z" fill="#fdebc8"/><path d="M588.7 37.8V35.4C587.2 35.6 586.6 34.9 586.7 34.1C586.8 33 588.2 32.5 590.1 32.5C592 32.5 593.4 33 593.5 34.1C593.6 34.9 592.8 35.6 591.2 35.4V37.8Z" fill="#fdebc8"/><path d="M580.7 28.4H583C582.4 27.4 583 26.2 584.6 26.2C586.4 26.2 586.6 28.2 586.4 29.6C586.4 31.2 586.2 33 584.6 33C583 33 582.4 31.8 583 30.9H580.7M588.7 37.6V35.4C587.2 35.6 586.6 34.9 586.7 34.1C586.8 33 588.2 32.5 590.1 32.5C592 32.5 593.4 33 593.5 34.1C593.6 34.9 592.8 35.6 591.2 35.4V37.6" fill="none" stroke="#48a8d8" stroke-width="0.6"/></svg>
<div style="position:absolute;left:484.2px;top:90.8px;width:98.2px;height:117.4px;background:#ffffff;box-shadow:1.2px 1.2px 1.2px 0.3px rgba(60,64,68,0.75);"></div>
<div style="position:absolute;left:484.2px;top:90.8px;width:17px;height:117.4px;background:#f3f6f8;"></div>
<div style="position:absolute;left:501.2px;top:90.8px;width:0.6px;height:117.4px;background:#e4e8ea;"></div>
<div class="t " style="left:506px;top:95.80px;">重新造型</div>
<div class="t " style="left:506px;top:110.10px;">顶点倒圆角</div>
<div class="t " style="left:506px;top:124.70px;">将切面混合到曲面</div>
<div class="t d" style="left:506px;top:139.20px;">外来曲面</div>
<div class="t " style="left:506px;top:153.70px;">展平面组</div>
<div class="t " style="left:506px;top:168.40px;">展平面组变形</div>
<div class="t " style="left:506px;top:183.00px;">内部体积块</div>
<div class="t " style="left:506px;top:197.70px;">外围体积块</div>
<svg class="a" style="left:0;top:0" width="785" height="570" viewBox="0 0 785 570"><path d="M488.2 108.4H493.2C495.6 108.8 496.8 110.8 496.6 113.4C496.4 115.6 495.6 117 494.6 117.9H488.2Z" fill="#b9e8f8"/><path d="M493.2 108.5C495.6 108.8 496.8 110.8 496.6 113.4C496.4 115.6 495.6 117 494.6 117.9" fill="none" stroke="#2f8ab5" stroke-width="0.8"/><path d="M493.2 108.5H497.6L496.2 114" fill="none" stroke="#5a6064" stroke-width="0.4"/><rect x="497" y="107.8" width="1.1" height="1.1" fill="#222"/><path d="M488 155.8L490.3 153.4L496.5 152.7L497.6 158.8L493 161Z" fill="#d2c2f0" stroke="#9365c4" stroke-width="0.7" stroke-linejoin="round"/><ellipse cx="492.7" cy="168.6" rx="4.5" ry="1.5" fill="#fafafa" stroke="#a3a8ac" stroke-width="0.55"/><path d="M489.6 170.2L491.3 171.4L489.6 172.6Z" fill="#222"/><path d="M493.2 171.8H496.4M494.8 170.3V173.2" stroke="#222" stroke-width="0.65"/><rect x="488.2" y="173.8" width="9.2" height="2.7" fill="#2a80ae"/><path d="M489 175.3H496.8" stroke="#9fd0e8" stroke-width="0.6" stroke-dasharray="1.1 0.5"/><path d="M488.2 183.6L490.2 181.4H498.1L496 183.6Z" fill="#c9cdd0"/><path d="M496 183.6L498.1 181.4V188.6L496 190.8Z" fill="#858c92"/><rect x="488.2" y="183.6" width="7.8" height="7.2" fill="#b2b7bb"/><rect x="488.2" y="185" width="7.8" height="3.5" fill="#2f8cc0"/><path d="M496 185L498.1 182.8V186.3L496 188.5Z" fill="#1f6f9c"/><path d="M489 186.8H495.2" stroke="#cfe9f6" stroke-width="0.7" stroke-dasharray="1.2 0.5"/><path d="M488.6 197.6L490.8 195.4H497.8V203.6L495.6 205.8H488.6Z" fill="#e4f4fb" stroke="#45a5d4" stroke-width="0.7"/><path d="M488.6 197.6H495.6V205.8M495.6 197.6L497.8 195.4" fill="none" stroke="#45a5d4" stroke-width="0.7"/><rect x="491" y="199.2" width="4.2" height="5" fill="#f4fbfe" stroke="#3b9acb" stroke-width="0.6"/><path d="M492.6 201.4H494V204H492.6Z" fill="#1e6fa0"/><rect x="485.1" y="147.4" width="75.2" height="17.4" fill="none" stroke="#f03636" stroke-width="1.8"/></svg>
</div></body></html>
